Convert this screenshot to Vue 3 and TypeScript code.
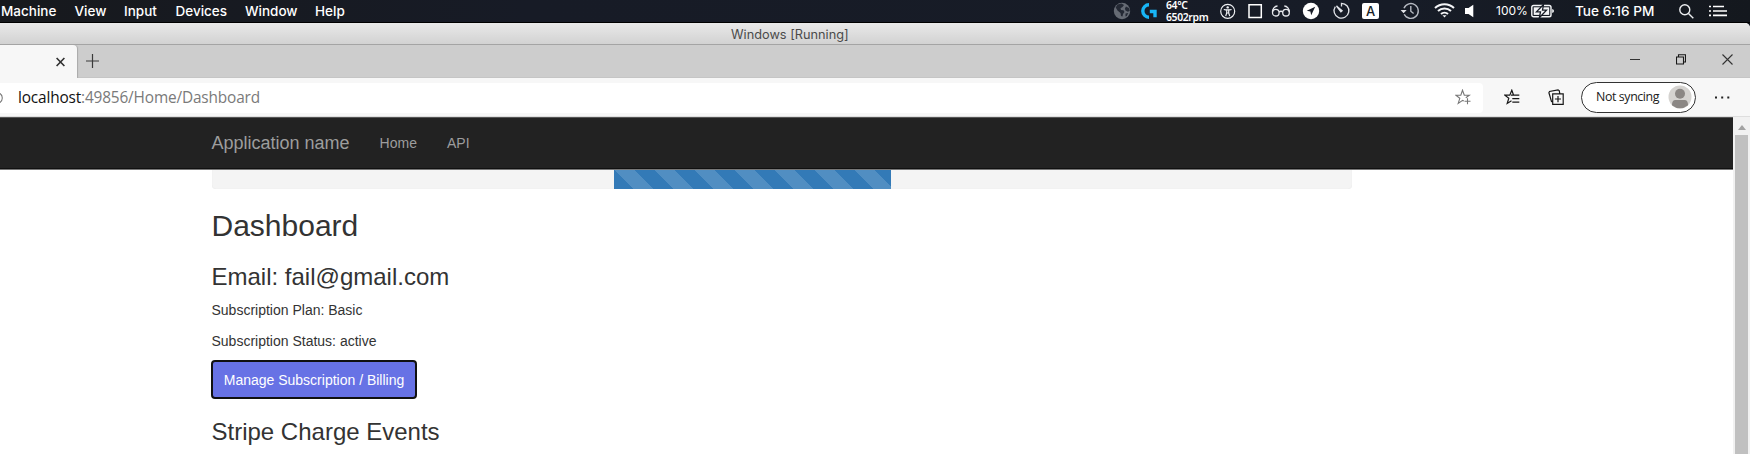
<script setup lang="ts">
const menus: string[] = ['Machine', 'View', 'Input', 'Devices', 'Window', 'Help']
const navLinks: string[] = ['Home', 'API']
const account = { email: 'fail@gmail.com', plan: 'Basic', status: 'active' }
</script>

<template>
  <div class="screen">
    <header class="menubar">
      <nav class="menus">
        <span v-for="m in menus" :key="m">{{ m }}</span>
      </nav>
      <div class="status">
        <svg width="18" height="22" viewBox="0 0 18 22"><circle cx="9" cy="11" r="8.2" fill="#666b74" /><path d="M4.5 4.5l4-1 2.5 1.5-1.5 2-2 1.2.5 1.8 2.5.3 1 1.7-1.5 2-.5 2.5-1.5-.5-.5-3-3-2.5-1.8-3zM13 6.5l3 1.5.8 3-2 .8-2.3-1.3-.6-2zM12.5 13.5l2.8-.5-1.5 3-1.3.5z" fill="#242934" /></svg>
        <svg width="18" height="22" viewBox="0 0 18 22" fill="none" stroke="#18b5f5" stroke-width="3.4"><path d="M9 4.8a6.2 6.2 0 0 0 0 12.4M9.8 11.5h5.2v5.7" /></svg>
        <div class="sensor"><span>64°C</span><span>6502rpm</span></div>
        <svg width="18" height="22" viewBox="0 0 18 22" fill="none" stroke="#eef0f3" stroke-width="1.2"><circle cx="8.7" cy="11.3" r="7" /><circle cx="8.7" cy="7.4" r="1.2" fill="#eef0f3" stroke="none" /><path d="M4.8 9.5l2.9.6v2.7l-1 3.4M12.6 9.5l-2.9.6v2.7l1 3.4M7.7 9.8h2v3.2h-2z" /></svg>
        <svg width="15" height="22" viewBox="0 0 15 22"><path d="M1 4.8h12.3v12.7H1z" fill="none" stroke="#fff" stroke-width="1.5" /></svg>
        <svg width="20" height="22" viewBox="0 0 20 22" fill="none" stroke="#e6e8ec" stroke-width="1.3"><circle cx="4.8" cy="12.7" r="3.3" /><circle cx="15" cy="12.7" r="3.3" /><path d="M8 12q2-1.5 4 0M1.5 12c0-3 2-6 5-6M18.3 12c0-3-2-6-5-6" /></svg>
        <svg width="18" height="22" viewBox="0 0 18 22"><circle cx="9" cy="11" r="8.2" fill="#fff" /><path d="M13.2 6.8L4.8 10.7l3.6.8.8 3.7z" fill="#171c27" /></svg>
        <svg width="19" height="22" viewBox="0 0 19 22" fill="none" stroke="#e1e3e8" stroke-width="1.3"><path d="M9.5 6.5V3.3a7.4 7.4 0 1 1-6.2 3.3" /><path d="M4.5 6l5.6 4.7-1.2 1z" fill="#e1e3e8" /></svg>
        <span class="ime">A</span>
        <svg width="20" height="22" viewBox="0 0 20 22" fill="none" stroke="#b6bac2" stroke-width="1.4"><path d="M4 8.2a7.4 7.4 0 1 1 .2 6" /><path d="M.6 10h6L3.6 13.2z" fill="#e2e4e8" stroke="none" /><path d="M10.8 6v5.2l2.8 2.3" /></svg>
        <svg width="22" height="22" viewBox="0 0 22 22" fill="none" stroke="#f5f6f8" stroke-width="2"><path d="M1 8a13.8 13.8 0 0 1 19 0M4 11a9.4 9.4 0 0 1 13 0M7 14a5.2 5.2 0 0 1 7 0" /><path d="M8.5 15.3h4l-2 2.2z" fill="#f5f6f8" stroke="none" /></svg>
        <svg width="12" height="22" viewBox="0 0 12 22"><path d="M1 8h3.5L9.3 4.8v12.5L4.5 14H1z" fill="#fff" /></svg>
        <span class="percent">100%</span>
        <svg width="24" height="22" viewBox="0 0 24 22"><rect x=".8" y="5.5" width="19.2" height="11.2" rx="1.8" fill="none" stroke="#f4f5f7" stroke-width="1.4" /><path d="M2.7 7.3h15.5v7.6H2.7z" fill="#f4f5f7" /><path d="M12.5 4.5L5.5 11.8h4l-1.2 6 7.2-7.7h-4z" fill="#f4f5f7" stroke="#171c26" stroke-width="1.3" /><path d="M21.2 9q1.8.3 1.8 2t-1.8 2z" fill="#f4f5f7" /></svg>
        <span class="clock">Tue 6:16 PM</span>
        <svg width="17" height="22" viewBox="0 0 17 22" fill="none" stroke="#eceef0" stroke-width="1.4"><circle cx="6.8" cy="9.8" r="5" /><path d="M10.5 13.5l4.8 4.8" /></svg>
        <svg width="20" height="22" viewBox="0 0 20 22" stroke="#fff" stroke-width="1.7"><path d="M1 6.5h2M5 6.5h11M1 11h2M5 11h14M1 15.3h2M5 15.3h14" /></svg>
      </div>
    </header>

    <section class="vm">
      <div class="titlebar"><span>Windows [Running]</span></div>
      <div class="tabs">
        <div class="tab"><svg width="9" height="10" viewBox="0 0 9 10"><path d="M.6 1l7.8 8M8.4 1L.6 9" stroke="#303030" stroke-width="1.6" /></svg></div>
        <svg class="plus" width="13" height="14" viewBox="0 0 13 14"><path d="M6.5 0v14M0 7h13" stroke="#3a3a3a" stroke-width="1.2" /></svg>
        <div class="controls">
          <svg width="10" height="11" viewBox="0 0 10 11"><path d="M0 5.5h10" stroke="#333" stroke-width="1.2" /></svg>
          <svg width="10" height="11" viewBox="0 0 10 11" fill="none" stroke="#181818" stroke-width="1.1"><path d="M.5 3h7v7h-7zM2.5 3V.8h7V8h-2" /></svg>
          <svg width="11" height="11" viewBox="0 0 11 11"><path d="M.5.5l10 10M10.5.5l-10 10" stroke="#333" stroke-width="1.1" /></svg>
        </div>
      </div>

      <div class="toolbar">
        <div class="address">
          <svg class="info" width="3" height="14" viewBox="0 0 3 14"><path d="M-2 1.5Q2.3 3 2.3 7T-2 12.5" fill="none" stroke="#777" stroke-width="1.1" /></svg>
          <span class="url"><b>localhost</b>:49856/Home/Dashboard</span>
          <svg class="fav" width="17" height="17" viewBox="0 0 17 17" fill="none" stroke="#777" stroke-width="1.1"><path d="M8.8 12.1L7.6 11.4 3.2 14.4 4.8 9.3.8 6.2h5L7.5 1.2l1.8 5h5l-3.5 2.6M12.5 9.2v6M9.5 12.2h6" /></svg>
        </div>
        <svg class="favorites" width="17" height="17" viewBox="0 0 17 17" fill="none" stroke="#181818" stroke-width="1.2"><path d="M9.6 6.2L7.8 1.2 5.8 6.2H.8l4 3.1-1.6 5.2 4.3-2.7M7 6.2h8.3M8.3 9.7h7M8.3 13.2h7" /></svg>
        <svg class="collections" width="17" height="17" viewBox="0 0 17 17" fill="none" stroke="#181818" stroke-width="1.2"><path d="M4.7 4.8h10.5v10.5H4.7zM10 7v6.2M6.9 10H13M4.7 13l-1.2-.5L.9 3.7 1.5 2.5 10 .9l1.2.7.7 3.2" /></svg>
        <div class="profile">
          <span>Not syncing</span>
          <svg width="24" height="24" viewBox="0 0 24 24"><circle cx="12" cy="12" r="11.5" fill="#d5d3d0" /><circle cx="12" cy="8.8" r="5" fill="#8b8784" /><path d="M3.9 20.2Q4 15 7.5 15h9q3.5 0 3.6 5.2Q12 26.5 3.9 20.2z" fill="#8b8784" /></svg>
        </div>
        <svg class="more" width="15" height="3" viewBox="0 0 15 3"><path d="M0 .5h2v2H0zM6.2.5h2v2h-2zM12.3.5h2v2h-2z" fill="#222" /></svg>
      </div>

      <div class="viewport">
        <div class="page">
          <nav class="navbar">
            <span class="brand">Application name</span>
            <a v-for="l in navLinks" :key="l">{{ l }}</a>
          </nav>
          <main>
            <div class="progress"><div class="bar"></div></div>
            <h2>Dashboard</h2>
            <h3>Email: {{ account.email }}</h3>
            <p>Subscription Plan: {{ account.plan }}</p>
            <p>Subscription Status: {{ account.status }}</p>
            <button type="button">Manage Subscription / Billing</button>
            <h3 class="events">Stripe Charge Events</h3>
          </main>
        </div>
        <aside class="scrollbar">
          <svg width="8" height="5" viewBox="0 0 8 5"><path d="M0 5l4-5 4 5z" fill="#a2a2a2" /></svg>
          <div class="thumb"></div>
        </aside>
      </div>
    </section>
  </div>
</template>

<style>
body { margin: 0; background: #fff; overflow: hidden; }
</style>

<style scoped>
.screen { width: 1750px; height: 454px; overflow: hidden; display: flex; flex-direction: column; background: #10141c; font-family: "Liberation Sans", Arial, sans-serif; }
.screen * { box-sizing: border-box; }
svg { display: block; flex: none; }
span { white-space: nowrap; }
.menubar { height: 23px; flex: none; display: flex; justify-content: space-between; background: linear-gradient(90deg, #17191d, #171b26 30%, #171c27 80%, #14181e); border-bottom: 1px solid #000; color: #fff; font-family: Inter, sans-serif; }
.menus { display: grid; grid-template-columns: 73.5px 49.5px 51.5px 69.5px 70px 40px; padding-left: 1px; font-size: 13.5px; font-weight: 500; line-height: 22px; }
.status { display: grid; grid-template-columns: 27px 26px 53px 29px 23px 31px 30px 30px 38px 34px 30px 32px 35px 44px 103px 30px 42px; height: 22px; }
.sensor { display: flex; flex-direction: column; font: 600 10.4px/12px "Noto Sans", sans-serif; letter-spacing: -.35px; margin-top: -1px; }
.ime { width: 17px; height: 16px; margin-top: 3px; border-radius: 2px; background: #fff; color: #171c26; font-size: 13px; font-weight: 500; line-height: 16px; text-align: center; }
.percent { font-size: 12px; line-height: 22px; }
.clock { font-size: 13.6px; font-weight: 500; line-height: 22px; }
.vm { flex: 1; display: flex; flex-direction: column; border-top-right-radius: 5px; overflow: hidden; background: #fff; min-height: 0; }
.titlebar { height: 22px; flex: none; padding-left: 731px; background: linear-gradient(#e9e9e9, #d2d2d2); border-bottom: 1px solid #a4a4a4; font: 12.75px/23px Inter, sans-serif; color: #4b4b4b; }
.tabs { height: 33px; flex: none; display: flex; background: #cdcdcd; border-bottom: 1px solid #c5c5c5; }
.tab { width: 77px; height: 33px; background: #f7f7f7; border-top-right-radius: 4px; box-shadow: 1px 0 1px #aaa; padding: 12px 0 0 56px; }
.plus { margin: 9px 0 0 9px; }
.controls { margin: 9px 17px 0 auto; display: flex; gap: 36px; }
.toolbar { height: 39px; flex: none; display: flex; align-items: center; background: #f7f7f7; border-bottom: 1px solid #dedede; }
.address { width: 1483px; height: 30px; display: flex; align-items: center; background: #fff; border-radius: 0 4px 4px 0; margin-top: 1px; }
.url { margin-left: 15px; font: 15.4px/30px "Open Sans", sans-serif; letter-spacing: -.16px; color: #7a7a7a; }
.url b { color: #111; font-weight: 400; }
.fav { margin-left: auto; margin-right: 11px; }
.favorites { margin-left: 21px; }
.collections { margin-left: 27px; }
.profile { width: 115px; height: 31px; margin-left: 16px; display: flex; align-items: center; justify-content: space-between; border: 1.4px solid #333; border-radius: 16px; padding: 0 3px 0 14px; font: 12.4px/28px "Open Sans", sans-serif; letter-spacing: -.4px; color: #202020; background: #fff; }
.more { margin-left: 19px; }
.viewport { flex: 1; min-height: 0; display: flex; }
.page { width: 1733px; }
.navbar { height: 52px; background: #222; border-top: 1px solid #555; border-bottom: 1px solid #101010; display: flex; align-items: center; gap: 30px; padding-left: 211.5px; color: #9d9d9d; font-size: 14px; box-shadow: 0 1px 0 #777; position: relative; }
.brand { font-size: 18px; }
main { padding-left: 211.5px; color: #333; }
.progress { width: 1140px; height: 20px; margin-left: .5px; padding-left: 402px; background: #f4f4f4; border-radius: 0 0 4px 4px; box-shadow: inset 0 0 1px #ddd; }
.bar { width: 277px; height: 20px; background: #337ab7 linear-gradient(45deg, rgba(255,255,255,.15) 25%, transparent 25%, transparent 50%, rgba(255,255,255,.15) 50%, rgba(255,255,255,.15) 75%, transparent 75%) 0 0 / 40px 40px; }
h2, h3 { font-weight: 400; margin: 0; }
h2 { font-size: 30px; line-height: 33px; margin-top: 20px; }
h3 { font-size: 24px; line-height: 26px; margin-top: 22px; }
p { font-size: 14px; line-height: 20px; margin: 0 0 11px; }
h3 + p { margin-top: 10px; }
button { display: block; width: 206px; height: 39px; margin: -2px 0 0 -.5px; padding: 1px 0 0; border: 2px solid #101010; border-radius: 4px; background: #6772e5; color: #fff; font: 14px/35px "Liberation Sans", Arial, sans-serif; }
.events { margin-top: 20px; }
.scrollbar { width: 17px; background: #f1f1f1; display: flex; flex-direction: column; align-items: center; padding-top: 8px; }
.thumb { width: 13px; flex: 1; margin-top: 5px; background: #c0c0c0; }
</style>
